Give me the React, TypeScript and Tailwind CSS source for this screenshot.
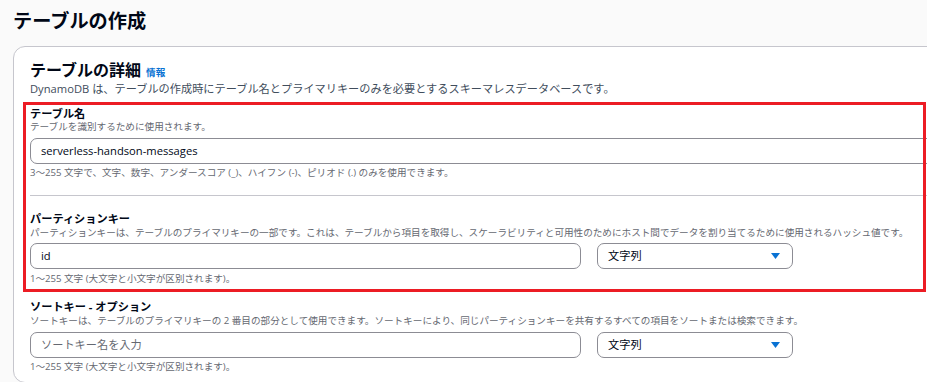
import React from "react";

const FONT = { fontFamily: '"Open Sans", "Noto Sans CJK JP", sans-serif' };

function Caret() {
  return (
    <svg width="9" height="6" viewBox="0 0 9 6" className="shrink-0">
      <path d="M0 0 H9 L4.5 6 Z" fill="#0972d3" />
    </svg>
  );
}

function Select() {
  return (
    <div className="w-[196px] h-[26px] shrink-0 border border-[#8c8c94] rounded-[7px] flex items-center justify-between pl-[10px] pr-[12px] bg-white">
      <span className="text-[11.2px] text-[#000716]">文字列</span>
      <Caret />
    </div>
  );
}

export default function App() {
  return (
    <div className="relative w-[930px] h-[382px] overflow-hidden bg-white" style={FONT}>
      <div className="w-[927px] h-full overflow-hidden bg-[#fafafa] pl-[13px]">
        <h1 className="pt-[8px] text-[19.2px] leading-[26px] font-bold text-[#000716] whitespace-nowrap">
          テーブルの作成
        </h1>
        <div className="mt-[12px] w-[1000px] h-[337px] bg-white border border-[#c6c6cd] rounded-[12px] pl-[16px] pt-[13px] whitespace-nowrap">
          <div className="flex items-baseline h-[20px]">
            <h2 className="text-[16px] leading-[20px] font-bold text-[#000716]">テーブルの詳細</h2>
            <span className="ml-[5px] text-[9.6px] font-bold text-[#0972d3]">情報</span>
          </div>
          <p className="mt-[2px] text-[11.2px] leading-[14px] text-[#414d5c]">
            DynamoDB は、テーブルの作成時にテーブル名とプライマリキーのみを必要とするスキーマレスデータベースです。
          </p>

          {/* テーブル名 */}
          <div className="mt-[11px] text-[11.2px] leading-[14px] font-bold text-[#000716]">テーブル名</div>
          <div className="text-[9.6px] leading-[12px] text-[#656871]">テーブルを識別するために使用されます。</div>
          <div className="mt-[5px] w-[960px] h-[26px] border border-[#8c8c94] rounded-[7px] flex items-center pl-[10px] bg-white">
            <span className="text-[11.2px] text-[#000716]">serverless-handson-messages</span>
          </div>
          <div className="mt-[3px] text-[9.6px] leading-[12px] text-[#656871]">
            3〜255 文字で、文字、数字、アンダースコア (_)、ハイフン (-)、ピリオド (.) のみを使用できます。
          </div>

          <div className="mt-[16px] w-[960px] h-px bg-[#c6c6cd]" />

          {/* パーティションキー */}
          <div className="mt-[16px] text-[11.2px] leading-[14px] font-bold text-[#000716]">パーティションキー</div>
          <div className="mt-[1px] text-[9.6px] leading-[12px] text-[#656871]">
            パーティションキーは、テーブルのプライマリキーの一部です。これは、テーブルから項目を取得し、スケーラビリティと可用性のためにホスト間でデータを割り当てるために使用されるハッシュ値です。
          </div>
          <div className="mt-[4px] flex gap-[16px]">
            <div className="w-[551px] h-[26px] border border-[#8c8c94] rounded-[7px] flex items-center pl-[10px] bg-white">
              <span className="text-[11.2px] text-[#000716]">id</span>
            </div>
            <Select />
          </div>
          <div className="mt-[4px] text-[9.6px] leading-[12px] text-[#656871]">
            1〜255 文字 (大文字と小文字が区別されます)。
          </div>

          {/* ソートキー */}
          <div className="mt-[15px] text-[11.2px] leading-[14px] font-bold text-[#000716]">ソートキー - オプション</div>
          <div className="mt-[1px] text-[9.6px] leading-[12px] text-[#656871]">
            ソートキーは、テーブルのプライマリキーの 2 番目の部分として使用できます。ソートキーにより、同じパーティションキーを共有するすべての項目をソートまたは検索できます。
          </div>
          <div className="mt-[5px] flex gap-[16px]">
            <div className="w-[551px] h-[26px] border border-[#8c8c94] rounded-[7px] flex items-center pl-[10px] bg-white">
              <span className="text-[11.2px] text-[#656871]">ソートキー名を入力</span>
            </div>
            <Select />
          </div>
          <div className="mt-[3px] text-[9.6px] leading-[12px] text-[#656871]">
            1〜255 文字 (大文字と小文字が区別されます)。
          </div>
        </div>
      </div>

      {/* red annotation box */}
      <div className="pointer-events-none absolute left-[23px] top-[102px] w-[903px] h-[190px] border-[3px] border-[#ec1c24]" />
    </div>
  );
}
